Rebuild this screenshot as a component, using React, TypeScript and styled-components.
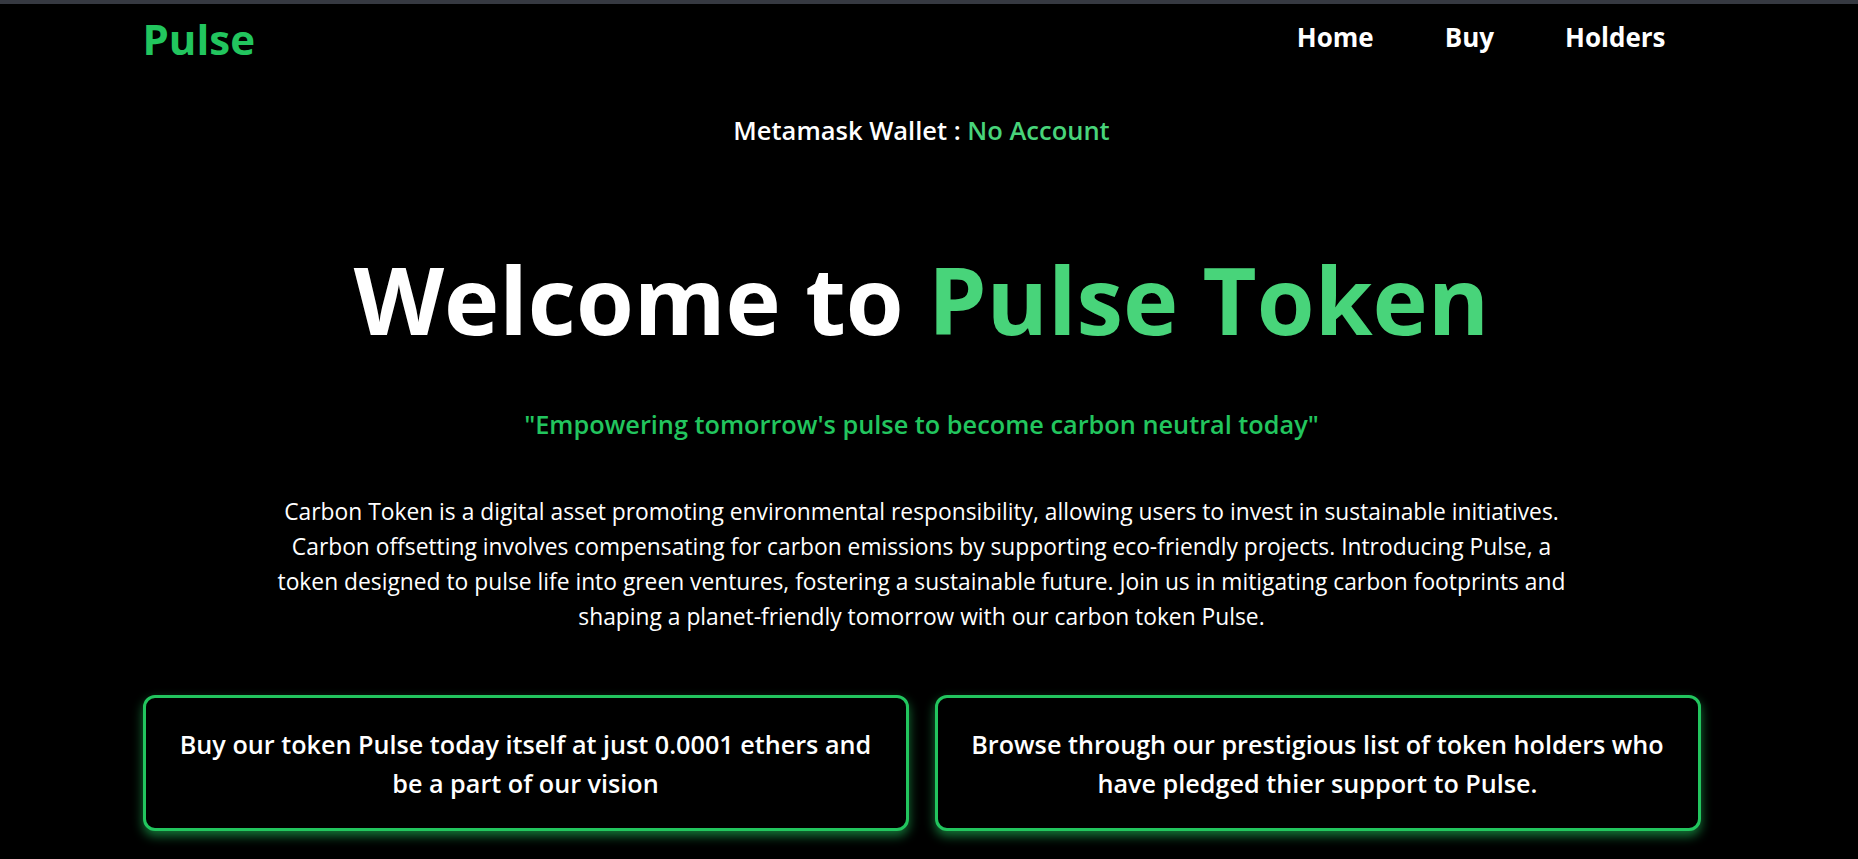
import React from "react";
import styled, { createGlobalStyle } from "styled-components";

const GlobalStyle = createGlobalStyle`
  html, body {
    margin: 0;
    padding: 0;
    background: #000;
  }
  body {
    font-family: "Open Sans", "Noto Sans", sans-serif;
    color: #fff;
  }
  * { box-sizing: border-box; }
`;

const Page = styled.div`
  min-height: 100vh;
  background: #000;
  border-top: 4px solid #363941;
  padding-right: 15px;
`;

const Container = styled.div`
  max-width: 1558px;
  margin: 0 auto;
`;

const NavBar = styled.nav`
  display: flex;
  align-items: center;
  justify-content: space-between;
  padding: 10px 0;
`;

const Logo = styled.a`
  font-size: 42px;
  line-height: 1.2;
  font-weight: 700;
  color: #22c55e;
  text-decoration: none;
`;

const NavLinks = styled.ul`
  display: flex;
  list-style: none;
  margin: 0;
  padding: 0 0 3px 0;
`;

const NavLink = styled.a`
  display: block;
  padding: 0 35px 0 36px;
  font-size: 26px;
  line-height: 1.2;
  font-weight: 700;
  color: #fff;
  text-decoration: none;
`;

const Hero = styled.main`
  display: flex;
  flex-direction: column;
  align-items: center;
  text-align: center;
`;

const Wallet = styled.p`
  margin: 38px 0 0;
  font-size: 25.5px;
  line-height: 36px;
  font-weight: 600;
`;

const Accent = styled.span<{ $tone?: "bright" | "base" }>`
  color: ${(p) => (p.$tone === "base" ? "#22c55e" : "#48d47a")};
`;

const Title = styled.h1`
  margin: 95px 0 0;
  font-size: 93.5px;
  line-height: 1.2;
  font-weight: 700;
`;

const Tagline = styled.p`
  margin: 51px 0 0;
  font-size: 25.3px;
  line-height: 34.5px;
  font-weight: 600;
  color: #22c55e;
`;

const Description = styled.p`
  margin: 53px 0 0;
  width: 1310px;
  font-size: 22.8px;
  line-height: 35px;
  font-weight: 400;
`;

const Cards = styled.section`
  display: grid;
  grid-template-columns: 1fr 1fr;
  gap: 26px;
  width: 100%;
  margin-top: 61px;
`;

const Card = styled.a`
  display: flex;
  align-items: center;
  justify-content: center;
  height: 136px;
  padding: 2px 26px 0;
  border: 3px solid #22c55e;
  border-radius: 12px;
  background: #000;
  box-shadow: 0 5px 11px rgba(34, 197, 94, 0.6);
  color: #fff;
  text-decoration: none;
  font-size: 25.2px;
  line-height: 39.5px;
  font-weight: 600;
`;

export default function App() {
  return (
    <>
      <GlobalStyle />
      <Page>
        <Container>
          <NavBar>
            <Logo href="#">Pulse</Logo>
            <NavLinks>
              <li><NavLink href="#">Home</NavLink></li>
              <li><NavLink href="#">Buy</NavLink></li>
              <li><NavLink href="#">Holders</NavLink></li>
            </NavLinks>
          </NavBar>
          <Hero>
            <Wallet>
              Metamask Wallet : <Accent>No Account</Accent>
            </Wallet>
            <Title>
              Welcome to <Accent>Pulse Token</Accent>
            </Title>
            <Tagline>"Empowering tomorrow's pulse to become carbon neutral today"</Tagline>
            <Description>
              Carbon Token is a digital asset promoting environmental responsibility, allowing users to invest in
              sustainable initiatives. Carbon offsetting involves compensating for carbon emissions by supporting
              eco-friendly projects. Introducing Pulse, a token designed to pulse life into green ventures, fostering a
              sustainable future. Join us in mitigating carbon footprints and shaping a planet-friendly tomorrow with our
              carbon token Pulse.
            </Description>
            <Cards>
              <Card href="#">Buy our token Pulse today itself at just 0.0001 ethers and be a part of our vision</Card>
              <Card href="#">Browse through our prestigious list of token holders who have pledged thier support to Pulse.</Card>
            </Cards>
          </Hero>
        </Container>
      </Page>
    </>
  );
}
